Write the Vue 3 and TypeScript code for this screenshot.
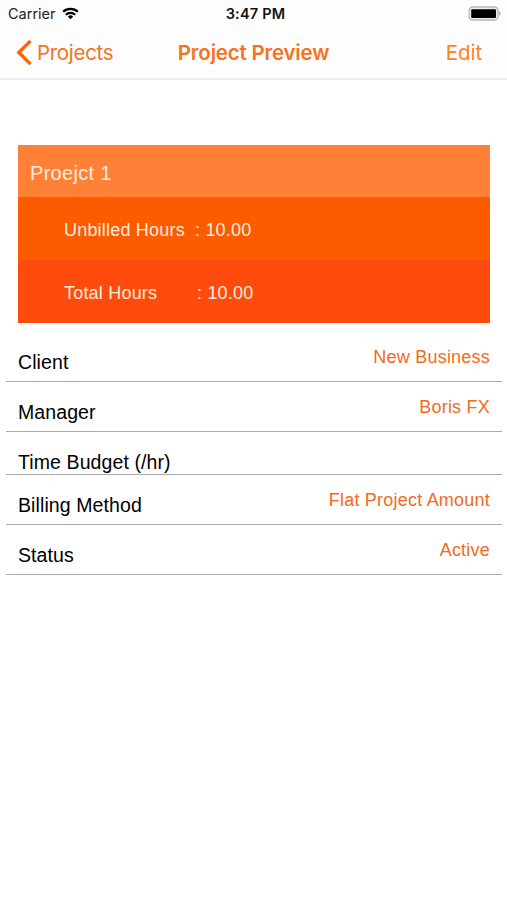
<script setup lang="ts">
interface Detail {
  label: string
  value: string
  size: 'first' | 'regular' | 'empty'
}

const details: Detail[] = [
  { label: 'Client', value: 'New Business', size: 'first' },
  { label: 'Manager', value: 'Boris FX', size: 'regular' },
  { label: 'Time Budget (/hr)', value: '', size: 'empty' },
  { label: 'Billing Method', value: 'Flat Project Amount', size: 'regular' },
  { label: 'Status', value: 'Active', size: 'regular' },
]
</script>

<template>
  <div class="screen">
    <header class="top">
      <div class="status">
        <div class="carrier">
          <span>Carrier</span>
          <svg class="wifi" width="17" height="13" viewBox="0 0 18 13" fill="none" stroke="#000" stroke-width="2.4">
            <path d="M1.2 4.7a11.2 11.2 0 0 1 15.6 0" />
            <path d="M4 7.8a7.2 7.2 0 0 1 10 0" />
            <path d="M9 12.5 6.2 9.9a3.9 3.9 0 0 1 5.6 0Z" fill="#000" stroke="none" />
          </svg>
        </div>
        <span class="time">3:47 PM</span>
        <svg class="battery" width="33" height="15" viewBox="0 0 33 15">
          <rect x="1.2" y="1" width="28.8" height="13" rx="3.6" fill="#eee" stroke="#b5b5b5" stroke-width="1.3" />
          <rect x="3.2" y="3.2" width="24.8" height="8.8" rx="1" fill="#000" />
          <path d="M31.2 5.3c1.7.6 1.7 3.8 0 4.4Z" fill="#999" />
        </svg>
      </div>
      <nav class="bar">
        <a class="back">
          <svg width="16" height="27" viewBox="0 0 16 27" fill="none" stroke="#ff6200" stroke-width="3.3">
            <path d="M14.5 1.8 2.8 13.5l11.7 11.7" />
          </svg>
          <span>Projects</span>
        </a>
        <h1 class="title">Project Preview</h1>
        <a class="edit">Edit</a>
      </nav>
    </header>

    <section class="card">
      <div class="name">Proejct 1</div>
      <div class="hours unbilled"><span class="key">Unbilled Hours</span><span>: 10.00</span></div>
      <div class="hours total"><span class="key">Total Hours</span><span>: 10.00</span></div>
    </section>

    <section class="details">
      <div v-for="d in details" :key="d.label" class="row" :class="d.size">
        <span class="label">{{ d.label }}</span>
        <span class="value">{{ d.value }}</span>
      </div>
    </section>
  </div>
</template>

<style>
body {
  background: #fff;
}
</style>

<style scoped>
.screen {
  width: 507px;
  height: 900px;
  overflow: hidden;
  background: #fff;
  color: #000;
  font-family: 'Liberation Sans', Arial, sans-serif;
}
.top {
  box-sizing: border-box;
  height: 80px;
  background: #fdfdfd;
  border-bottom: 2px solid #ededed;
  font-family: Inter, sans-serif;
}
.status {
  display: grid;
  grid-template-columns: 1fr auto 1fr;
  align-items: center;
  height: 27px;
  padding: 0 6px 0 8px;
  color: #222;
  font-size: 14.5px;
}
.carrier {
  display: flex;
  align-items: center;
  gap: 6px;
}
.time {
  position: relative;
  left: 1px;
  color: #111;
  font-weight: 600;
  font-size: 14.5px;
  letter-spacing: 0.2px;
}
.battery {
  justify-self: end;
}
.bar {
  display: grid;
  grid-template-columns: 1fr auto 1fr;
  align-items: center;
  height: 51px;
  padding: 0 16px;
  color: #f5731e;
  font-size: 20.5px;
  letter-spacing: -0.3px;
}
.back {
  display: flex;
  align-items: center;
  gap: 5px;
}
.title {
  margin: 0;
  font-size: 20.5px;
  font-weight: 600;
  letter-spacing: -0.2px;
}
.edit {
  justify-self: end;
  margin-right: 9px;
  color: #fb8420;
  letter-spacing: -0.1px;
}
.card {
  margin: 65px 17px 0 18px;
  color: #ffeddf;
}
.name {
  height: 52px;
  padding-left: 12px;
  background: #ff8137;
  font-size: 20px;
  letter-spacing: 0.3px;
  line-height: 56px;
}
.hours {
  display: flex;
  height: 63px;
  padding-left: 46px;
  font-size: 18px;
  letter-spacing: 0.2px;
  line-height: 66px;
}
.unbilled {
  background: #fc5b00;
}
.total {
  background: #ff4b0d;
}
.key {
  width: 131px;
}
.total .key {
  width: 133px;
}
.details {
  margin: 0 5px 0 6px;
}
.row {
  box-sizing: border-box;
  display: flex;
  justify-content: space-between;
  align-items: flex-start;
  height: 50px;
  padding: 19px 12px 0;
  border-bottom: 1px solid #aaa;
}
.first {
  height: 59px;
  padding-top: 28px;
}
.empty {
  height: 43px;
}
.label {
  font-size: 19.5px;
  letter-spacing: 0.1px;
  line-height: 23px;
}
.value {
  margin-top: -5px;
  color: #f26a21;
  font-size: 18px;
  letter-spacing: 0.22px;
  line-height: 23px;
}
</style>
